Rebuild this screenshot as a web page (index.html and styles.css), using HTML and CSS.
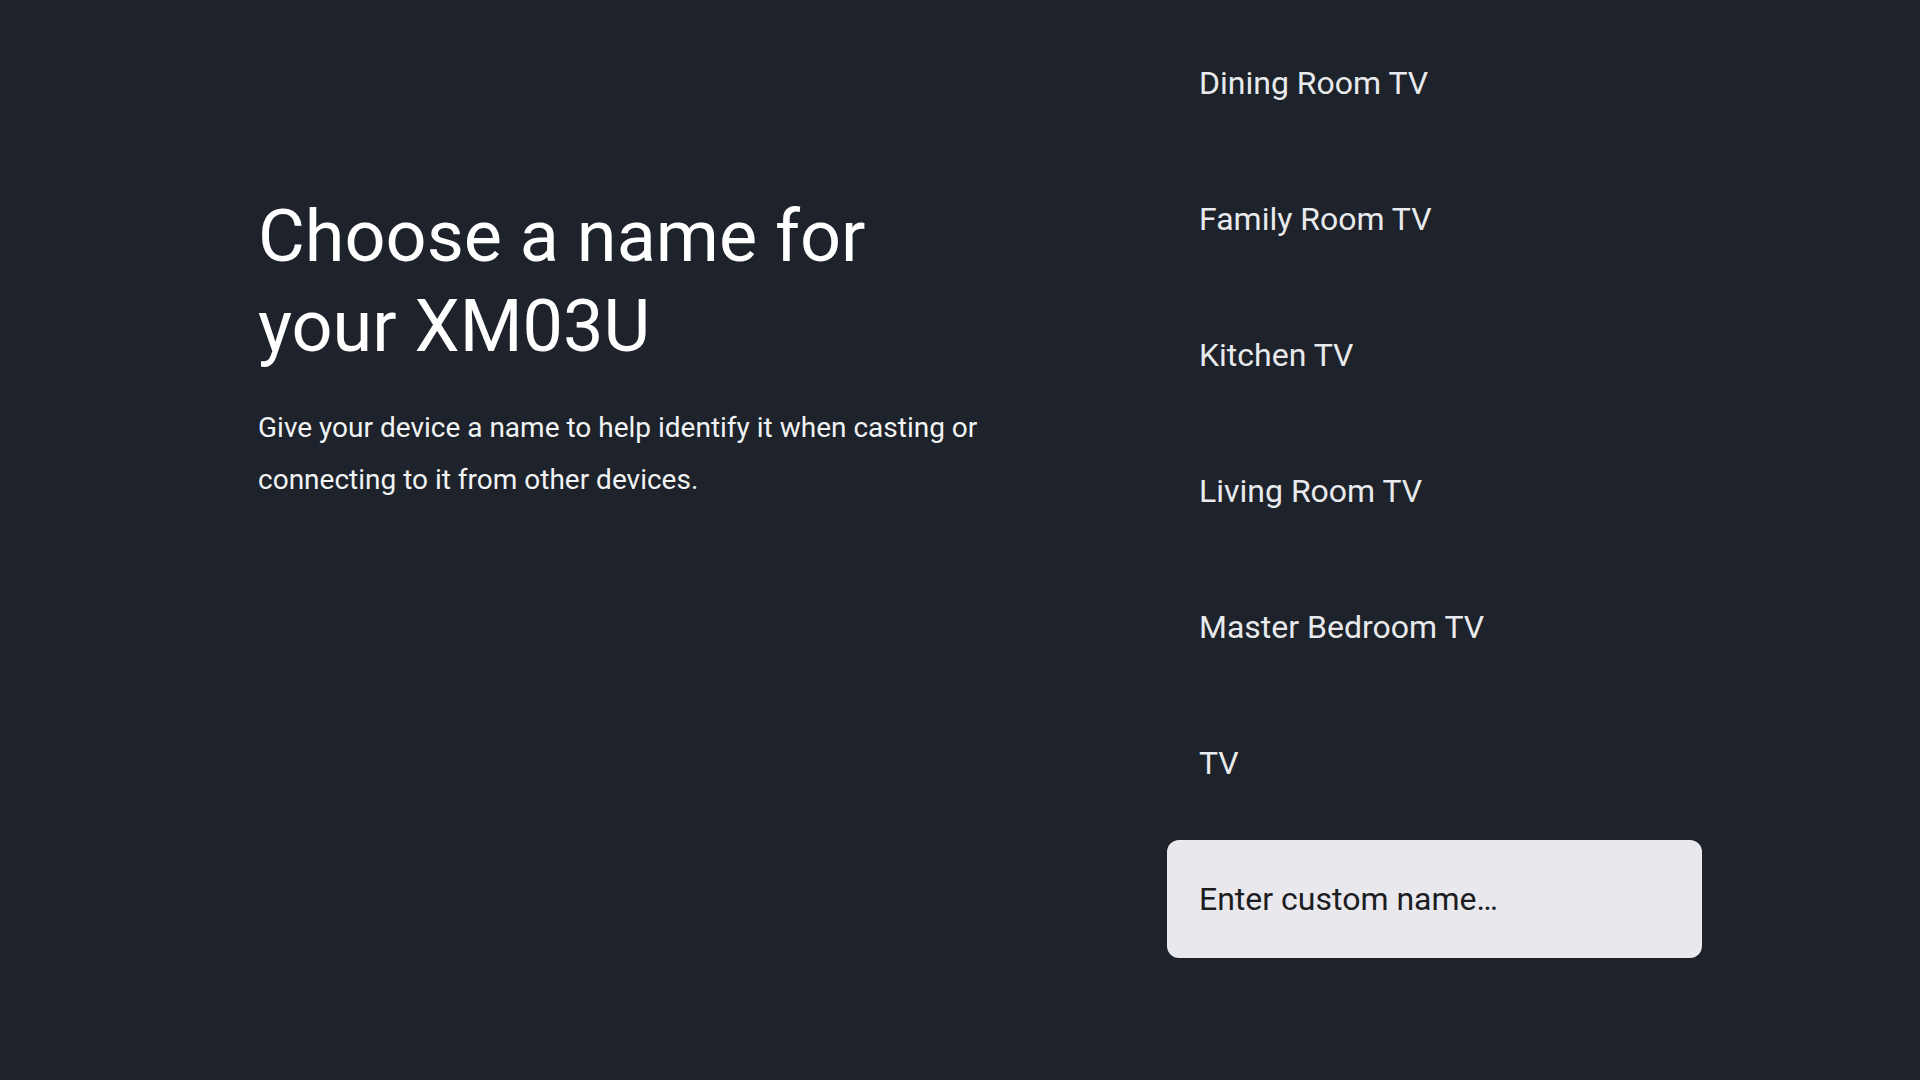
FILE: index.html
```html
<!DOCTYPE html>
<html lang="en">

<head>
    <meta charset="UTF-8">
    <meta name="viewport" content="width=device-width, initial-scale=1.0">
    <title>Device name</title>
    <link rel="stylesheet" href="styles.css">
</head>

<body>
    <div class="screen">
        <!-- Title and description -->
        <div class="intro">
            <div class="intro-text">
                <h1>Choose a name for your XM03U</h1>
                <p>Give your device a name to help identify it when casting or connecting to it from other devices.</p>
            </div>
        </div>

        <!-- Name options -->
        <ul class="options">
            <li class="option">Dining Room TV</li>
            <li class="option">Family Room TV</li>
            <li class="option">Kitchen TV</li>
            <li class="option">Living Room TV</li>
            <li class="option">Master Bedroom TV</li>
            <li class="option">TV</li>
            <li class="option focused">Enter custom name…</li>
        </ul>
    </div>
</body>

</html>
```

FILE: styles.css
```css
/* Reset */

* {
    margin: 0;
    padding: 0;
    box-sizing: border-box;
}

body {
    font-family: Roboto, "Noto Sans", sans-serif;
    background-color: #1e222a;
    color: #ffffff;
    width: 1920px;
    height: 1080px;
    overflow: hidden;
}

.screen {
    display: flex;
    height: 100%;
}

/* Left column */

.intro {
    width: 1167px;
    padding-left: 258px;
    padding-top: 192px;
}

.intro-text {
    width: 740px;
}

h1 {
    font-size: 72px;
    font-weight: 400;
    line-height: 90px;
    color: #ffffff;
}

p {
    margin-top: 30px;
    font-size: 28px;
    line-height: 52px;
    color: #f1f3f4;
}

/* Right column list */

.options {
    list-style: none;
    width: 535px;
    padding-top: 24px;
    display: flex;
    flex-direction: column;
    gap: 18px;
}

.option {
    height: 118px;
    display: flex;
    align-items: center;
    padding: 0 32px;
    border-radius: 12px;
    font-size: 32px;
    color: #e8eaed;
}

.option.focused {
    background-color: #e8e8ed;
    color: #1b1d21;
}
```
